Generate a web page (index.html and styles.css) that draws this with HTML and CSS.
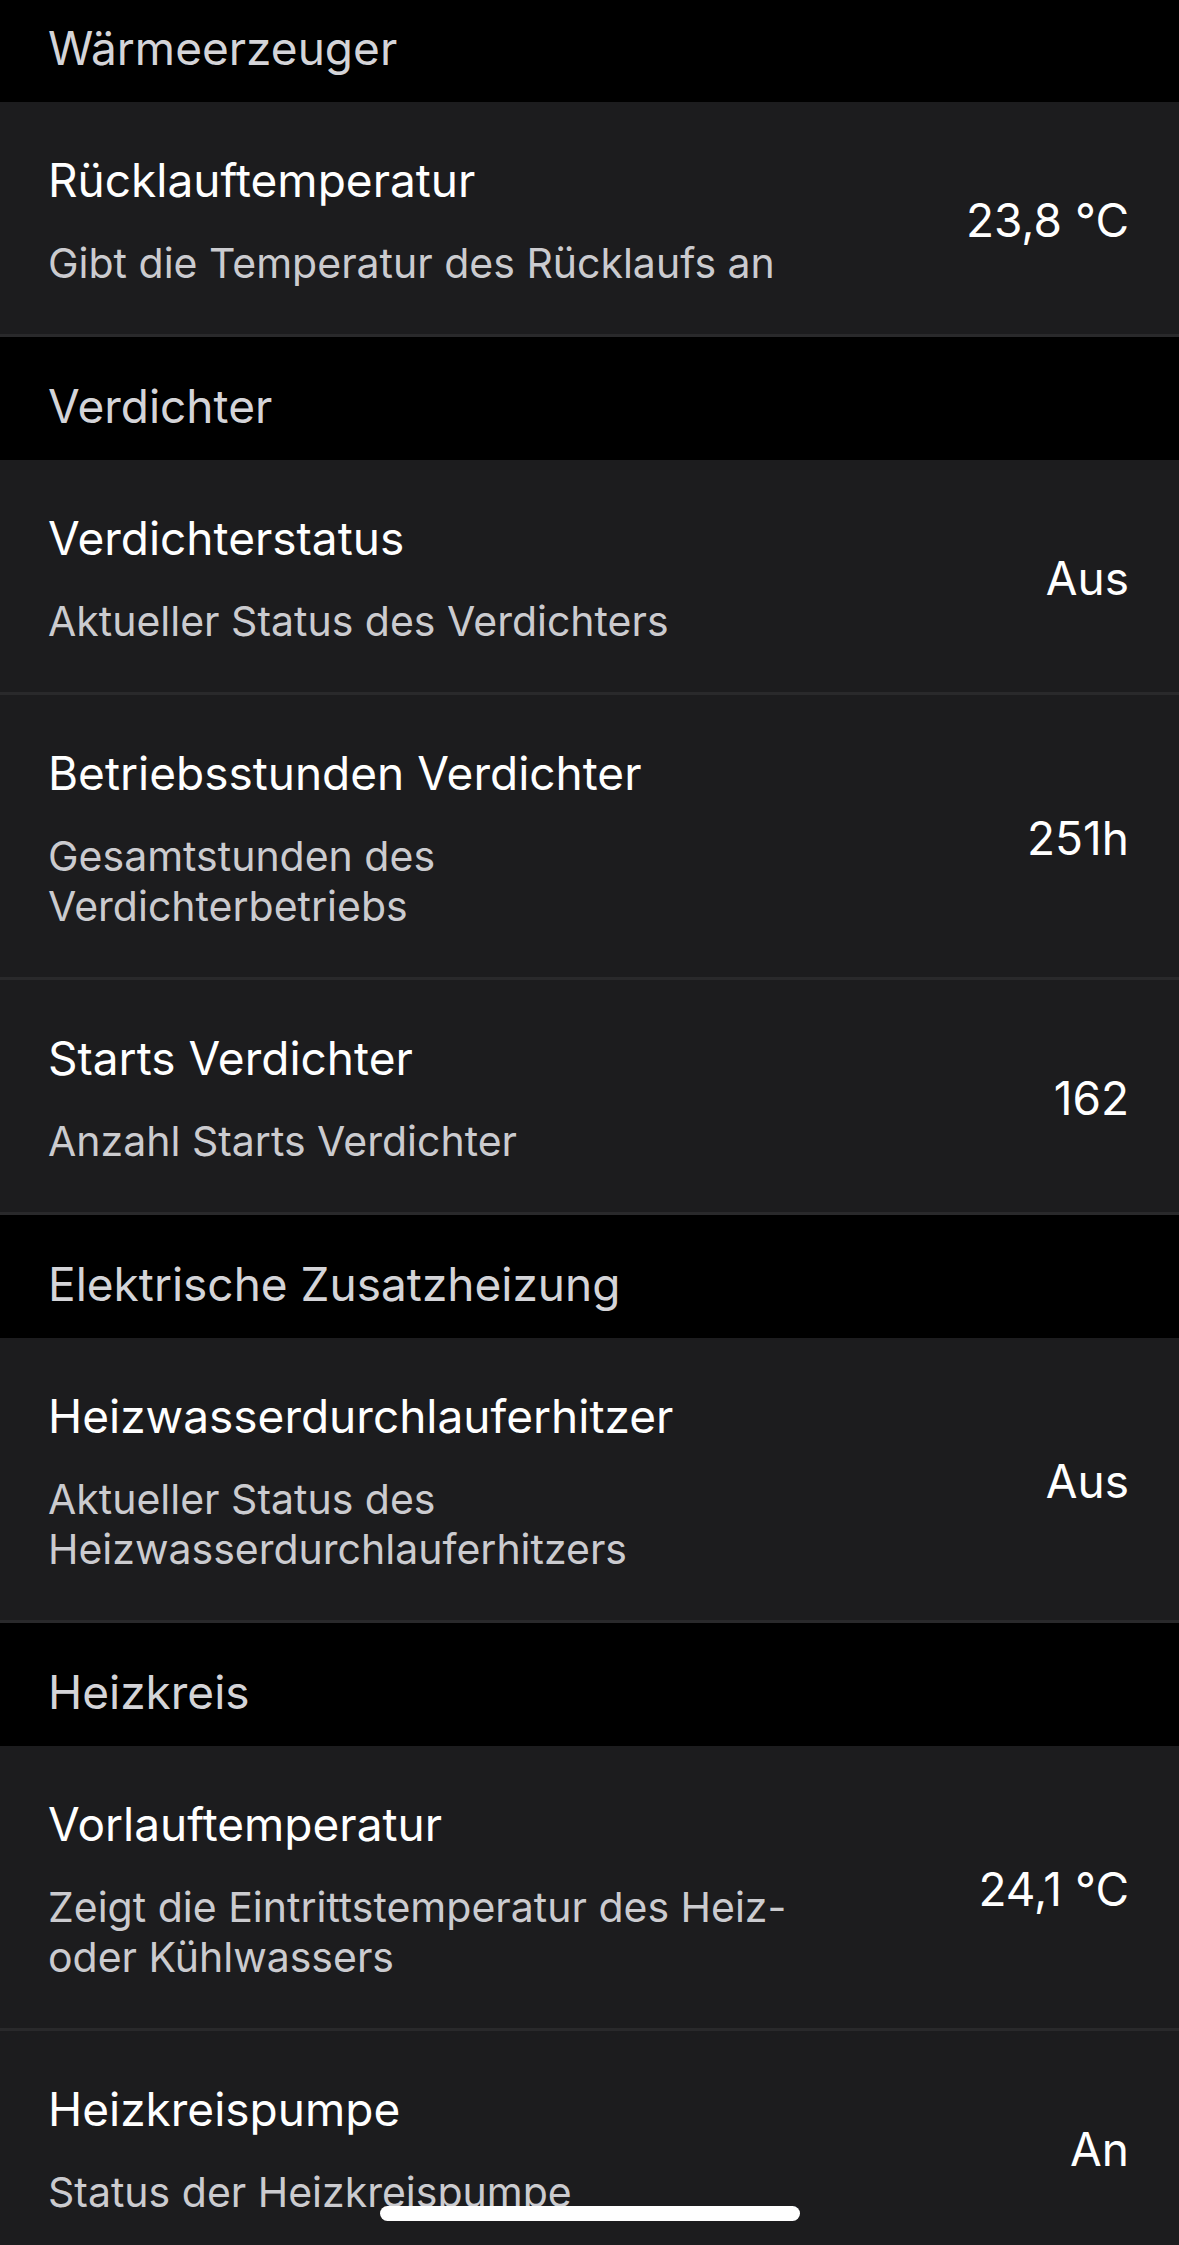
FILE: index.html
```html
<!DOCTYPE html>
<html lang="de">
<head>
  <meta charset="UTF-8" />
  <meta name="viewport" content="width=device-width, initial-scale=1" />
  <title>Wärmepumpe | Status</title>
  <link rel="stylesheet" href="styles.css">
</head>
<body>

<main class="list">
  <section class="group">
    <h2 class="group-title">Wärmeerzeuger</h2>
    <div class="row">
      <div class="row-text">
        <div class="row-title">Rücklauftemperatur</div>
        <div class="row-sub">Gibt die Temperatur des Rücklaufs an</div>
      </div>
      <div class="row-value">23,8 °C</div>
    </div>
  </section>

  <section class="group">
    <h2 class="group-title">Verdichter</h2>
    <div class="row">
      <div class="row-text">
        <div class="row-title">Verdichterstatus</div>
        <div class="row-sub">Aktueller Status des Verdichters</div>
      </div>
      <div class="row-value">Aus</div>
    </div>
    <div class="row">
      <div class="row-text">
        <div class="row-title">Betriebsstunden Verdichter</div>
        <div class="row-sub">Gesamtstunden des Verdichterbetriebs</div>
      </div>
      <div class="row-value">251h</div>
    </div>
    <div class="row">
      <div class="row-text">
        <div class="row-title">Starts Verdichter</div>
        <div class="row-sub">Anzahl Starts Verdichter</div>
      </div>
      <div class="row-value">162</div>
    </div>
  </section>

  <section class="group">
    <h2 class="group-title">Elektrische Zusatzheizung</h2>
    <div class="row">
      <div class="row-text">
        <div class="row-title">Heizwasserdurchlauferhitzer</div>
        <div class="row-sub">Aktueller Status des Heizwasserdurchlauferhitzers</div>
      </div>
      <div class="row-value">Aus</div>
    </div>
  </section>

  <section class="group">
    <h2 class="group-title">Heizkreis</h2>
    <div class="row">
      <div class="row-text">
        <div class="row-title">Vorlauftemperatur</div>
        <div class="row-sub">Zeigt die Eintrittstemperatur des Heiz- oder Kühlwassers</div>
      </div>
      <div class="row-value">24,1 °C</div>
    </div>
    <div class="row">
      <div class="row-text">
        <div class="row-title">Heizkreispumpe</div>
        <div class="row-sub">Status der Heizkreispumpe</div>
      </div>
      <div class="row-value">An</div>
    </div>
  </section>
</main>

<!-- iOS home indicator -->
<div class="home-indicator"></div>

</body>
</html>
```

FILE: styles.css
```css
/* Grundlayout */
* {
  box-sizing: border-box;
}
html, body {
  height: 100%;
}
body {
  margin: 0;
  background-color: #000;
  color: #fff;
  font-family: Inter, "Noto Sans", sans-serif;
  overflow: hidden;
}
/* Liste leicht gescrollt */
.list {
  margin-top: -21px;
}
.group-title {
  margin: 0;
  padding: 42px 48px 27px;
  font-size: 46px;
  line-height: 54px;
  font-weight: 400;
  color: #d4d4d8;
}
/* Zeilen */
.row {
  display: flex;
  align-items: center;
  justify-content: space-between;
  background-color: #1c1c1e;
  border-bottom: 3px solid #29292b;
  padding: 50px 50px 46px 48px;
}
.row-text {
  max-width: 748px;
}
.row-title {
  font-size: 46px;
  line-height: 56px;
}
.row-sub {
  margin-top: 30px;
  font-size: 41px;
  line-height: 50px;
  color: #cbcbcf;
}
.row-value {
  font-size: 46px;
  line-height: 56px;
  white-space: nowrap;
}
.home-indicator {
  position: fixed;
  left: 50%;
  bottom: 24px;
  width: 420px;
  height: 15px;
  margin-left: -210px;
  border-radius: 8px;
  background-color: #fff;
}
```
